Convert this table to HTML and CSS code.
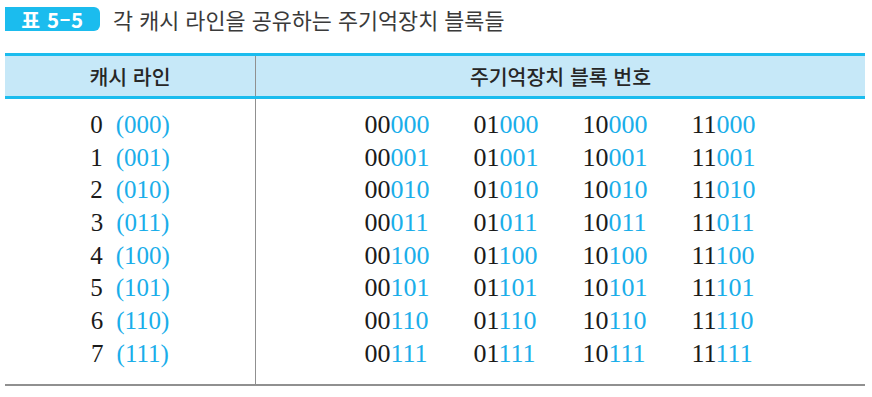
FILE: index.html
```html
<!DOCTYPE html>
<html lang="ko">
<head>
<meta charset="utf-8">
<link rel="stylesheet" href="styles.css">
</head>
<body>
<div class="caption">
  <span class="badge">표 5–5</span>
  <span class="title">각 캐시 라인을 공유하는 주기억장치 블록들</span>
</div>
<table class="tbl">
  <thead>
    <tr>
      <th class="c-left">캐시 라인</th>
      <th class="c-right">주기억장치 블록 번호</th>
    </tr>
  </thead>
  <tbody>
    <tr>
      <td class="c-left">
        <div class="lines">
          <div class="line">0<span class="b">(000)</span></div>
          <div class="line">1<span class="b">(001)</span></div>
          <div class="line">2<span class="b">(010)</span></div>
          <div class="line">3<span class="b">(011)</span></div>
          <div class="line">4<span class="b">(100)</span></div>
          <div class="line">5<span class="b">(101)</span></div>
          <div class="line">6<span class="b">(110)</span></div>
          <div class="line">7<span class="b">(111)</span></div>
        </div>
      </td>
      <td class="c-right">
        <div class="blocks">
          <span>00<i>000</i></span><span>01<i>000</i></span><span>10<i>000</i></span><span>11<i>000</i></span>
          <span>00<i>001</i></span><span>01<i>001</i></span><span>10<i>001</i></span><span>11<i>001</i></span>
          <span>00<i>010</i></span><span>01<i>010</i></span><span>10<i>010</i></span><span>11<i>010</i></span>
          <span>00<i>011</i></span><span>01<i>011</i></span><span>10<i>011</i></span><span>11<i>011</i></span>
          <span>00<i>100</i></span><span>01<i>100</i></span><span>10<i>100</i></span><span>11<i>100</i></span>
          <span>00<i>101</i></span><span>01<i>101</i></span><span>10<i>101</i></span><span>11<i>101</i></span>
          <span>00<i>110</i></span><span>01<i>110</i></span><span>10<i>110</i></span><span>11<i>110</i></span>
          <span>00<i>111</i></span><span>01<i>111</i></span><span>10<i>111</i></span><span>11<i>111</i></span>
        </div>
      </td>
    </tr>
  </tbody>
</table>
</body>
</html>
```
FILE: styles.css
```css
html, body {
  margin: 0;
  padding: 0;
  background: #ffffff;
}
body {
  padding: 7px 7px 0 5px;
  font-family: "Noto Sans CJK KR", "Noto Sans", sans-serif;
}
.caption {
  display: flex;
  align-items: center;
  height: 24px;
}
.badge {
  display: inline-flex;
  align-items: center;
  justify-content: center;
  width: 95px;
  height: 24px;
  background: #1bbcee;
  color: #ffffff;
  font-weight: 700;
  font-size: 20.5px;
  border-radius: 0 6px 6px 0;
  letter-spacing: 0.5px;
}
.title {
  margin-left: 13px;
  font-size: 21.8px;
  color: #3a3a3a;
}
.tbl {
  margin-top: 22px;
  width: 860px;
  border-collapse: collapse;
}
.tbl th {
  background: #c6e8f8;
  border-top: 3px solid #1bbcee;
  border-bottom: 3px solid #1bbcee;
  height: 40px;
  padding: 0;
  font-size: 20.5px;
  font-weight: 500;
  color: #262626;
}
.c-left {
  width: 250px;
  border-right: 1.5px solid #909090;
}
.tbl td {
  padding: 10px 0 13px;
  border-bottom: 2px solid #909090;
  vertical-align: top;
}
.lines {
  display: flex;
  flex-direction: column;
  align-items: center;
}
.line {
  height: 32.7px;
  line-height: 32.7px;
  font-family: "Liberation Serif", serif;
  font-size: 25px;
  color: #1a1a1a;
}
.b {
  margin-left: 13px;
  color: #1aaeea;
}
.blocks {
  display: grid;
  grid-template-columns: repeat(4, 65px);
  grid-auto-rows: 32.7px;
  column-gap: 44px;
  justify-content: center;
  font-family: "Liberation Serif", serif;
  font-size: 26px;
  line-height: 32.7px;
  color: #1a1a1a;
}
.blocks i {
  font-style: normal;
  color: #1aaeea;
}
```
